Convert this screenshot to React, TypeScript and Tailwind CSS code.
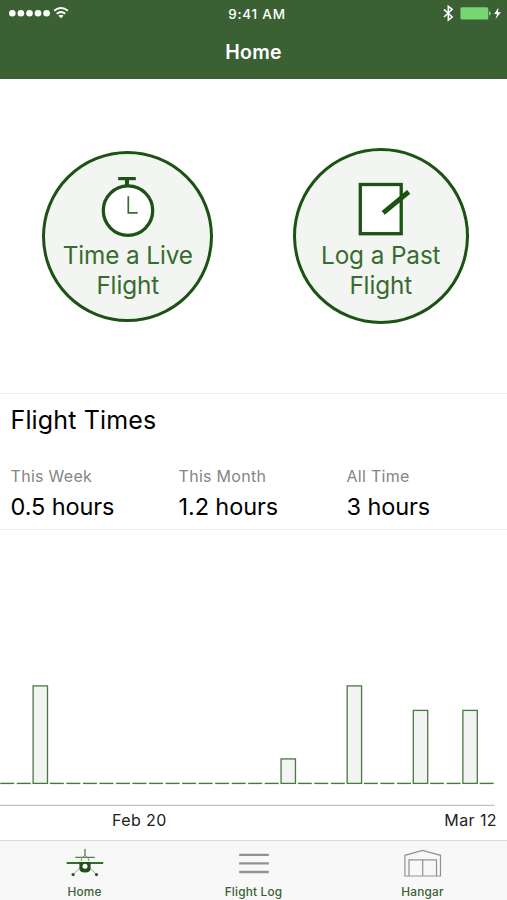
import React from "react";

const bars: Record<number, number> = { 2: 97.5, 17: 24.5, 21: 97.5, 25: 73, 28: 73 };

function StatusBar() {
  return (
    <div className="grid h-[28px] grid-cols-3 items-center">
      <svg width="72" height="28" viewBox="0 0 72 28" fill="white">
        {[12.3, 20.9, 29.5, 38, 46.6].map((x) => (
          <circle key={x} cx={x} cy="13.2" r="3.3" />
        ))}
        <g fill="none" stroke="white" strokeWidth="1.9">
          <path d="M54.1 10.8 Q61 5.4 67.9 10.8" />
          <path d="M56.7 13.7 Q61 10.2 65.3 13.7" />
        </g>
        <path d="M58.5 15.7 Q61 13.7 63.5 15.7 L61 18.3 Z" />
      </svg>
      <div className="pl-[7px] text-center text-[13.5px] font-medium leading-[28px] tracking-[0.75px]">9:41 AM</div>
      <svg className="justify-self-end" width="72" height="28" viewBox="435 0 72 28">
        <path d="M444 9.4 L452.2 17 L448.3 20.2 V6.3 L452.2 9.4 L444 17" fill="none" stroke="white" strokeWidth="1.5" />
        <rect x="460.4" y="7.2" width="27.9" height="12.4" rx="1.5" fill="#76d672" />
        <path d="M489 11.2 Q491 11.8 491 13.4 Q491 15 489 15.6 Z" fill="#76d672" />
        <path d="M498.5 7.6 L494.2 14 H497 L495.5 19 L501 12.2 H497.9 Z" fill="white" />
      </svg>
    </div>
  );
}

function StopwatchIcon() {
  return (
    <svg className="ml-[1px]" width="56" height="62" viewBox="0 0 56 62">
      <path d="M18.2 2.6 H35.8" stroke="#1c5213" strokeWidth="3.2" />
      <path d="M27 3 V10" stroke="#1c5213" strokeWidth="4" />
      <circle cx="28" cy="34.6" r="24.7" fill="white" stroke="#1c5213" strokeWidth="3.3" />
      <path d="M28.3 20.3 V36.8 H37.7" fill="none" stroke="#376c2f" strokeWidth="1.7" />
    </svg>
  );
}

function NoteIcon() {
  return (
    <svg className="ml-[7px]" width="56" height="62" viewBox="0 0 56 62">
      <rect x="4.3" y="8.5" width="40.9" height="49.2" fill="white" stroke="#1c5213" strokeWidth="3.3" />
      <path d="M27.2 36.9 L52.7 15.9" stroke="#1c5213" strokeWidth="5" />
    </svg>
  );
}

function PlaneIcon() {
  return (
    <svg width="40" height="30" viewBox="65 848 40 30" fill="none">
      <path d="M85 849 V856 M75.3 857.4 H94.7" stroke="#557d4c" strokeWidth="1.3" />
      <path d="M81 861 Q81 857 85 855.5 Q89 857 89 861" stroke="#789970" strokeWidth="1" />
      <path d="M66.7 863 H103.2" stroke="#356b2d" strokeWidth="2" />
      <path d="M80 868 L73.5 874 M90 868 L96 874" stroke="#9bb295" strokeWidth="1" />
      <circle cx="73.1" cy="874.6" r="1.6" fill="#29561f" />
      <circle cx="96.5" cy="874.6" r="1.6" fill="#29561f" />
      <path d="M79.4 862 H90.6 V868.5 Q90.6 872.5 85 872.5 Q79.4 872.5 79.4 868.5 Z" fill="#1c5213" />
      <circle cx="85" cy="866.2" r="2.5" fill="white" />
    </svg>
  );
}

function MenuIcon() {
  return (
    <svg width="40" height="30" viewBox="234 848 40 30">
      <path d="M239.2 854.8 H268.8 M239.2 863.4 H268.8 M239.2 872 H268.8" stroke="#929292" strokeWidth="2.3" />
    </svg>
  );
}

function HangarIcon() {
  return (
    <svg width="40" height="30" viewBox="402.5 848 40 30" fill="none" stroke="#929292" strokeWidth="1.2">
      <path d="M404.4 876 V855.3 L422 850.4 L440 855.3 V876 H436 V859.8 H408.5 V876 Z" />
      <path d="M408.5 876 H436 M422.2 859.8 V876" />
    </svg>
  );
}

const stats = [
  { label: "This Week", value: "0.5 hours" },
  { label: "This Month", value: "1.2 hours" },
  { label: "All Time", value: "3 hours" },
];

const tabs = [
  { label: "Home", Icon: PlaneIcon },
  { label: "Flight Log", Icon: MenuIcon },
  { label: "Hangar", Icon: HangarIcon },
];

export default function App() {
  return (
    <div className="flex h-[900px] w-[507px] flex-col overflow-hidden bg-white font-['Inter',sans-serif] text-black">
      <header className="h-[79px] bg-[#3b6034] text-white">
        <StatusBar />
        <h1 className="text-center text-[19.5px] font-semibold leading-[49px] tracking-[0.3px]">Home</h1>
      </header>

      <section className="grid h-[314px] grid-cols-2 items-center justify-items-center text-[24.3px] leading-[30.5px] tracking-[-0.1px] text-[#376c2f]">
        <button className="ml-[2px] flex size-[171px] flex-col items-center rounded-full border-3 border-[#1c5213] bg-[#f2f5f2] pt-[22px]">
          <StopwatchIcon />
          <span className="mt-[2px] whitespace-nowrap">Time a Live<br />Flight</span>
        </button>
        <button className="ml-[1px] flex size-[176px] flex-col items-center rounded-full border-3 border-[#1c5213] bg-[#f2f5f2] pt-[25px]">
          <NoteIcon />
          <span className="mt-[1.5px] whitespace-nowrap">Log a Past<br />Flight</span>
        </button>
      </section>

      <section className="h-[137px] border-y border-[#ececec] pl-[10.5px]">
        <h2 className="pt-[9px] text-[25px] leading-[34px] tracking-[0.15px]">Flight Times</h2>
        <div className="mt-[27px] grid grid-cols-[168px_168px_1fr]">
          {stats.map((s) => (
            <div key={s.label}>
              <div className="text-[16px] leading-[24px] tracking-[0.3px] text-[#858585]">{s.label}</div>
              <div className="text-[23.5px] leading-[37px] tracking-[-0.1px]">{s.value}</div>
            </div>
          ))}
        </div>
      </section>

      <section className="h-[310px] pt-px">
        <svg className="block" width="507" height="277" viewBox="0 531 507 277">
          {Array.from({ length: 30 }, (_, i) => {
            const x = 7.25 + 16.53 * i;
            const h = bars[i];
            return h ? (
              <rect key={i} x={x - 7.2} y={783.4 - h} width="14.4" height={h} fill="#f1f4f1" stroke="#4a7843" strokeWidth="1.3" />
            ) : (
              <path key={i} d={`M${x - 7} 783.4 H${x + 7}`} stroke="#4a7843" strokeWidth="1.4" />
            );
          })}
          <path d="M0 805.3 H494.5" stroke="#c0c0c0" strokeWidth="1.2" />
        </svg>
        <div className="flex justify-between pl-[112px] pr-[10px] text-[16px] leading-[24px] tracking-[0.4px] text-[#222]">
          <span>Feb 20</span>
          <span>Mar 12</span>
        </div>
      </section>

      <nav className="grid h-[60px] grid-cols-3 border-t border-[#d8d8d8] bg-[#f8f8f8]">
        {tabs.map(({ label, Icon }) => (
          <div key={label} className="flex flex-col items-center pt-[7px]">
            <Icon />
            <span className="text-[11.8px] font-medium leading-[28px] tracking-[0.2px] text-[#3b6034]">{label}</span>
          </div>
        ))}
      </nav>
    </div>
  );
}
